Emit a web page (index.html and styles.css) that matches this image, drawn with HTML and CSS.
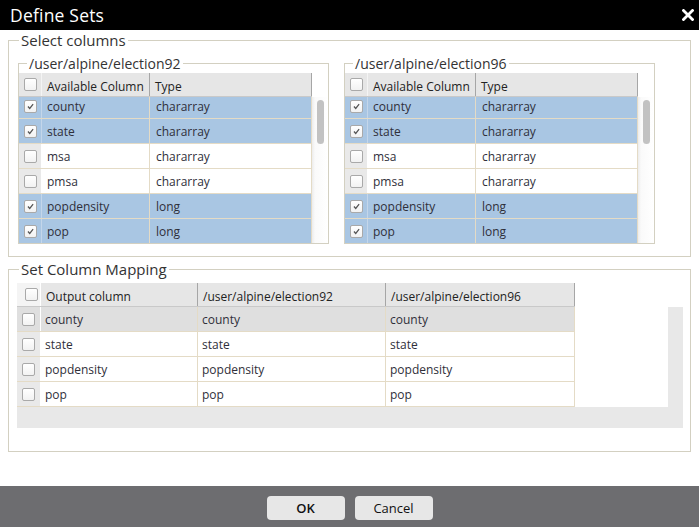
FILE: index.html
```html
<!DOCTYPE html>
<html>
<head>
<meta charset="utf-8">
<link rel="stylesheet" href="styles.css">
</head>
<body>
<div class="dialog">
  <div class="titlebar">
    <span class="title">Define Sets</span>
    <svg class="close" width="12" height="12" viewBox="0 0 12 12"><path d="M1.5 1.5 L10.5 10.5 M10.5 1.5 L1.5 10.5" stroke="#fff" stroke-width="2.8" stroke-linecap="square"/></svg>
  </div>
  <div class="content">
    <fieldset class="outer">
      <legend>Select columns</legend>
      <div class="sources">
        <fieldset class="source">
          <legend>/user/alpine/election92</legend>
          <div class="thead">
            <div class="hcell chk"><span class="cb"></span></div>
            <div class="hcell">Available Column</div>
            <div class="hcell">Type</div>
          </div>
          <div class="tbody">
            <div class="rows">
              <div class="rows-inner">
                <div class="row sel"><div class="cell chk"><span class="cb on"><svg viewBox="0 0 13 13"><path d="M3.5 6.5 L5.6 8.8 L9.6 3.8" fill="none" stroke="#555" stroke-width="1.5"/></svg></span></div><div class="cell">county</div><div class="cell">chararray</div></div>
                <div class="row sel"><div class="cell chk"><span class="cb on"><svg viewBox="0 0 13 13"><path d="M3.5 6.5 L5.6 8.8 L9.6 3.8" fill="none" stroke="#555" stroke-width="1.5"/></svg></span></div><div class="cell">state</div><div class="cell">chararray</div></div>
                <div class="row"><div class="cell chk"><span class="cb"></span></div><div class="cell">msa</div><div class="cell">chararray</div></div>
                <div class="row"><div class="cell chk"><span class="cb"></span></div><div class="cell">pmsa</div><div class="cell">chararray</div></div>
                <div class="row sel"><div class="cell chk"><span class="cb on"><svg viewBox="0 0 13 13"><path d="M3.5 6.5 L5.6 8.8 L9.6 3.8" fill="none" stroke="#555" stroke-width="1.5"/></svg></span></div><div class="cell">popdensity</div><div class="cell">long</div></div>
                <div class="row sel"><div class="cell chk"><span class="cb on"><svg viewBox="0 0 13 13"><path d="M3.5 6.5 L5.6 8.8 L9.6 3.8" fill="none" stroke="#555" stroke-width="1.5"/></svg></span></div><div class="cell">pop</div><div class="cell">long</div></div>
              </div>
            </div>
            <div class="vscroll"><div class="thumb"></div></div>
          </div>
        </fieldset>
        <fieldset class="source">
          <legend>/user/alpine/election96</legend>
          <div class="thead">
            <div class="hcell chk"><span class="cb"></span></div>
            <div class="hcell">Available Column</div>
            <div class="hcell">Type</div>
          </div>
          <div class="tbody">
            <div class="rows">
              <div class="rows-inner">
                <div class="row sel"><div class="cell chk"><span class="cb on"><svg viewBox="0 0 13 13"><path d="M3.5 6.5 L5.6 8.8 L9.6 3.8" fill="none" stroke="#555" stroke-width="1.5"/></svg></span></div><div class="cell">county</div><div class="cell">chararray</div></div>
                <div class="row sel"><div class="cell chk"><span class="cb on"><svg viewBox="0 0 13 13"><path d="M3.5 6.5 L5.6 8.8 L9.6 3.8" fill="none" stroke="#555" stroke-width="1.5"/></svg></span></div><div class="cell">state</div><div class="cell">chararray</div></div>
                <div class="row"><div class="cell chk"><span class="cb"></span></div><div class="cell">msa</div><div class="cell">chararray</div></div>
                <div class="row"><div class="cell chk"><span class="cb"></span></div><div class="cell">pmsa</div><div class="cell">chararray</div></div>
                <div class="row sel"><div class="cell chk"><span class="cb on"><svg viewBox="0 0 13 13"><path d="M3.5 6.5 L5.6 8.8 L9.6 3.8" fill="none" stroke="#555" stroke-width="1.5"/></svg></span></div><div class="cell">popdensity</div><div class="cell">long</div></div>
                <div class="row sel"><div class="cell chk"><span class="cb on"><svg viewBox="0 0 13 13"><path d="M3.5 6.5 L5.6 8.8 L9.6 3.8" fill="none" stroke="#555" stroke-width="1.5"/></svg></span></div><div class="cell">pop</div><div class="cell">long</div></div>
              </div>
            </div>
            <div class="vscroll"><div class="thumb"></div></div>
          </div>
        </fieldset>
      </div>
    </fieldset>

    <fieldset class="mapping">
      <legend>Set Column Mapping</legend>
      <div class="mhead">
        <div class="hcell chk"><span class="cb"></span></div>
        <div class="hcell">Output column</div>
        <div class="hcell">/user/alpine/election92</div>
        <div class="hcell">/user/alpine/election96</div>
      </div>
      <div class="mbody">
        <div class="mrows">
          <div class="mrow first"><div class="cell chk"><span class="cb"></span></div><div class="cell">county</div><div class="cell">county</div><div class="cell">county</div></div>
          <div class="mrow"><div class="cell chk"><span class="cb"></span></div><div class="cell">state</div><div class="cell">state</div><div class="cell">state</div></div>
          <div class="mrow"><div class="cell chk"><span class="cb"></span></div><div class="cell">popdensity</div><div class="cell">popdensity</div><div class="cell">popdensity</div></div>
          <div class="mrow"><div class="cell chk"><span class="cb"></span></div><div class="cell">pop</div><div class="cell">pop</div><div class="cell">pop</div></div>
        </div>
        <div class="vtrack"></div>
        <div class="htrack"></div>
      </div>
    </fieldset>
  </div>
  <div class="footer">
    <button class="btn ok">OK</button>
    <button class="btn">Cancel</button>
  </div>
</div>
</body>
</html>
```

FILE: styles.css
```css
* { box-sizing: border-box; }
html, body { margin: 0; padding: 0; background: #fff; }
body { font-family: "Open Sans", "DejaVu Sans", sans-serif; color: #2f2f3a; }

.dialog { width: 699px; height: 527px; display: flex; flex-direction: column; }

.titlebar {
  height: 30px; background: #000; color: #fff;
  display: flex; align-items: center; justify-content: space-between;
  padding: 0 5px 0 10px; flex: none;
}
.title { font-size: 17.5px; line-height: 30px; letter-spacing: 0.2px; }
.close { display: block; margin-top: -1px; }

.content { flex: 1; padding: 1px 8px 0 8px; }

fieldset {
  margin: 0; border: 1px solid #d3d0c1; min-width: 0;
}
legend {
  font-size: 14px; line-height: 19px; padding: 0 2px; color: #333;
}

.outer { padding: 4px 0 12px 9px; height: 226px; }
.outer > legend { margin-left: 1px; font-size: 15px; }

.sources { display: flex; gap: 15px; }

.source { width: 311px; padding: 0; }
.source > legend { margin-left: 8px; }

.thead {
  width: 293px; height: 24px; display: grid;
  grid-template-columns: 23px 108px 162px;
  background: #e6e6e6; border-bottom: 1px solid #c9c9c9;
}
.hcell {
  font-size: 12px; line-height: 23px; padding: 2px 0 0 5px; color: #222;
  border-right: 1px solid #a6a6a6; white-space: nowrap; overflow: hidden;
}
.hcell.chk { padding: 0; display: flex; align-items: center; justify-content: center; border-right: 1px solid #f4f4f4; }

.tbody { display: flex; height: 146px; overflow: hidden; }
.rows { width: 293px; overflow: hidden; }
.rows-inner { margin-top: -3px; }

.row {
  display: grid; grid-template-columns: 23px 108px 162px;
  height: 25px; border-bottom: 1px solid #e4dbc6; background: #fff;
}
.row.sel { background: #a9c6e3; }
.cell {
  font-size: 12px; line-height: 24px; padding: 1px 0 0 5px;
  border-right: 1px solid #e4dbc6; white-space: nowrap; overflow: hidden;
}
.row .cell:nth-child(3) { padding-left: 6px; }
.cell.chk {
  padding: 0; display: flex; align-items: center; justify-content: center;
  background: #e9e9e9; border-right: 1px solid #fff;
}
.row.sel .cell.chk { background: transparent; border-right-color: #c4d6ea; }

.cb {
  display: block; width: 13px; height: 13px; border: 1px solid #a9a9a9;
  border-radius: 2px; background: linear-gradient(#fff, #f2f2f2);
}
.cb svg { display: block; width: 11px; height: 11px; }

.vscroll {
  width: 16px; background: linear-gradient(to right, #ececec, #fafafa 3px, #fff);
  padding: 3px 0 0 5px;
}
.thumb { width: 7px; height: 44px; background: #c2c2c2; border-radius: 4px; }

.mapping { margin-top: 3px; padding: 4px 7px 23px 8px; }
.mapping > legend { margin-left: 2px; font-size: 15px; }

.mhead {
  width: 558px; height: 24px; display: grid;
  grid-template-columns: 24px 157px 188px 189px;
  background: #e6e6e6; border-bottom: 1px solid #c9c9c9;
}
.mhead .hcell.chk { background: #f4f4f4; border-right: 1px solid #fff; }
.mhead .hcell { padding-left: 5px; }

.mbody {
  display: grid; grid-template-columns: 651px 15px; grid-template-rows: 100px 21px;
}
.mrows { background: #fff; }
.mrow {
  width: 558px; display: grid; grid-template-columns: 24px 157px 188px 189px;
  height: 25px; border-bottom: 1px solid #e4dbc6;
}
.mrow.first { background: #dfdfdf; }
.mrow .cell { padding-left: 4px; }
.mrow .cell.chk { padding-left: 0; background: #e9e9e9; border-right: 1px solid #fff; }
.mrow.first .cell.chk { background: transparent; }
.vtrack { background: #e8e8e8; }
.htrack { grid-column: 1 / 3; background: #e8e8e8; }

.footer {
  height: 41px; flex: none; background: #6d6d70;
  display: flex; align-items: center; justify-content: center; gap: 10px;
  padding-top: 2px;
}
.btn {
  width: 78px; height: 24px; border: none; border-radius: 4px;
  background: #e7e7e7; font-family: "Open Sans", "DejaVu Sans", sans-serif;
  font-size: 13px; color: #111; padding: 0; margin-left: 0;
}
.btn.ok { font-weight: 600; }
```
